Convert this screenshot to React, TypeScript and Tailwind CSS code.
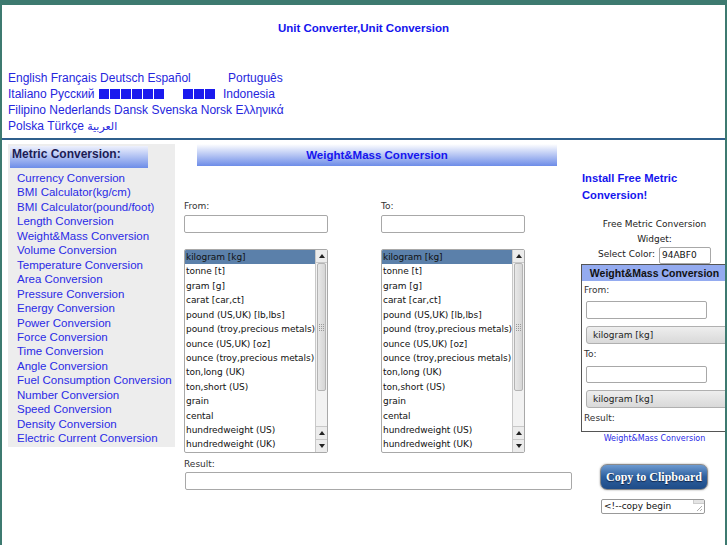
import React from "react";

const UNITS = [
  "kilogram [kg]",
  "tonne [t]",
  "gram [g]",
  "carat [car,ct]",
  "pound (US,UK) [lb,lbs]",
  "pound (troy,precious metals) [lb t]",
  "ounce (US,UK) [oz]",
  "ounce (troy,precious metals) [oz t]",
  "ton,long (UK)",
  "ton,short (US)",
  "grain",
  "cental",
  "hundredweight (US)",
  "hundredweight (UK)",
];

const LINKS = [
  "Currency Conversion",
  "BMI Calculator(kg/cm)",
  "BMI Calculator(pound/foot)",
  "Length Conversion",
  "Weight&Mass Conversion",
  "Volume Conversion",
  "Temperature Conversion",
  "Area Conversion",
  "Pressure Conversion",
  "Energy Conversion",
  "Power Conversion",
  "Force Conversion",
  "Time Conversion",
  "Angle Conversion",
  "Fuel Consumption Conversion",
  "Number Conversion",
  "Speed Conversion",
  "Density Conversion",
  "Electric Current Conversion",
];

function Tri({ down }: { down?: boolean }) {
  return (
    <svg width="6" height="4" viewBox="0 0 6 4" className="block">
      {down ? <polygon points="0,0 6,0 3,4" fill="#222" /> : <polygon points="0,4 6,4 3,0" fill="#222" />}
    </svg>
  );
}

function Scrollbar() {
  return (
    <div className="w-[12px] shrink-0 h-full flex flex-col border-l border-[#c8c8c8] bg-[#f2f2f2]">
      <div className="h-[13px] flex items-center justify-center border-b border-[#c8c8c8] bg-[#ececec]">
        <Tri />
      </div>
      <div className="h-[128px] mx-px rounded-[2px] border border-[#b4b4b4] bg-[linear-gradient(to_right,#e8e8e8,#d6d6d6)] flex items-center justify-center">
        <div className="grid grid-cols-3 gap-px">
          {Array.from({ length: 12 }).map((_, i) => (
            <div key={i} className="w-px h-px bg-[#9a9a9a]" />
          ))}
        </div>
      </div>
      <div className="flex-1" />
      <div className="h-[13px] flex items-center justify-center border-t border-[#c8c8c8] bg-[#ececec]">
        <Tri />
      </div>
      <div className="h-[13px] flex items-center justify-center border-t border-[#c8c8c8] bg-[#ececec]">
        <Tri down />
      </div>
    </div>
  );
}

function ListBox() {
  return (
    <div className="w-[144px] h-[204px] border border-[#a8a8a8] rounded-[2px] bg-white flex overflow-hidden">
      <div className="flex-1 overflow-hidden">
        {UNITS.map((u, i) => (
          <div
            key={u}
            className={
              i === 0
                ? "h-[14.43px] leading-[14.43px] pl-px whitespace-nowrap text-[9px] tracking-[-0.05px] text-[#111] bg-[#5b80aa]"
                : "h-[14.43px] leading-[14.43px] pl-px whitespace-nowrap text-[9px] tracking-[-0.05px] text-[#111]"
            }
          >
            {u}
          </div>
        ))}
      </div>
      <Scrollbar />
    </div>
  );
}

function Box() {
  return <span className="inline-block w-[10px] h-[10px] mr-px bg-[#1a1aee] align-[-1px]" />;
}

function WidgetSelect() {
  return (
    <div className="ml-[4px] w-[150px] h-[18px] rounded-[3px] border border-[#b0b0b0] bg-[linear-gradient(#eeeeee,#d9d9d9)] pl-[6px] text-[9px] leading-[16px] text-[#222]">
      kilogram [kg]
    </div>
  );
}

export default function App() {
  return (
    <div className="w-[727px] h-[545px] overflow-hidden bg-white border-t-[5px] border-x-2 border-[#3d7a70] font-['Liberation_Sans',Arial,sans-serif]">
      {/* Title */}
      <div className="pt-[15px] text-center text-[11.5px] leading-[16px] font-bold text-[#1515ee]">
        Unit Converter,Unit Conversion
      </div>

      {/* Languages */}
      <div className="mt-[34px] pl-[6px] text-[12px] leading-[16px] text-[#2626dd]">
        <div>
          English Français Deutsch Español <span className="ml-[34px]">Português</span>
        </div>
        <div>
          Italiano Русский{" "}
          <span className="inline-block ml-px">
            <Box />
            <Box />
            <Box />
            <Box />
            <Box />
            <Box />
          </span>
          <span className="inline-block ml-[18px]">
            <Box />
            <Box />
            <Box />
          </span>
          <span className="ml-[7px]">Indonesia</span>
        </div>
        <div>Filipino Nederlands Dansk Svenska Norsk Ελληνικά</div>
        <div>
          Polska Türkçe <span className="font-['DejaVu_Sans',sans-serif] text-[11px]">العربية</span>
        </div>
      </div>

      <div className="mt-[3px] h-[2px] bg-[#2f5f8c]" />

      {/* Columns */}
      <div className="flex items-start">
        {/* Sidebar */}
        <div className="ml-[6px] mt-[4px] w-[167px] shrink-0 bg-[#ededed] pt-[2px] pb-px">
          <div className="ml-[2px] w-[138px] h-[22px] bg-[linear-gradient(#eef1fd,#6d8de8)] pl-[2px] text-[12px] leading-[16px] font-bold text-[#1c1c55]">
            Metric Conversion:
          </div>
          <div className="mt-[3px] pl-[9px] text-[11.5px] leading-[14.45px] text-[#2a2ae6]">
            {LINKS.map((l) => (
              <div key={l} className="whitespace-nowrap">
                {l}
              </div>
            ))}
          </div>
        </div>

        {/* Middle */}
        <div className="ml-[9px] mt-[4px] w-[389px] shrink-0 font-['DejaVu_Sans',sans-serif]">
          <div className="ml-[13px] w-[360px] h-[22px] bg-[linear-gradient(#ffffff,#6d8ce8)] text-center font-['Liberation_Sans',Arial,sans-serif] text-[11.5px] font-bold leading-[22px] text-[#1515ee]">
            Weight&amp;Mass Conversion
          </div>
          <div className="mt-[34px] flex gap-[53px]">
            <div className="flex flex-col">
              <div className="text-[9px] leading-[12px] text-[#333]">From:</div>
              <div className="mt-[3px] w-[144px] h-[18px] rounded-[2px] border border-[#a8a8a8] bg-white" />
              <div className="mt-[16px]">
                <ListBox />
              </div>
            </div>
            <div className="flex flex-col">
              <div className="text-[9px] leading-[12px] text-[#333]">To:</div>
              <div className="mt-[3px] w-[144px] h-[18px] rounded-[2px] border border-[#a8a8a8] bg-white" />
              <div className="mt-[16px]">
                <ListBox />
              </div>
            </div>
          </div>
          <div className="mt-[5px] text-[9px] leading-[12px] text-[#333]">Result:</div>
          <div className="mt-[2px] ml-px w-[387px] h-[18px] rounded-[2px] border border-[#a8a8a8] bg-white" />
        </div>

        {/* Right */}
        <div className="ml-[8px] w-[147px] shrink-0 font-['DejaVu_Sans',sans-serif]">
          <div className="mt-[29.5px] pl-px font-['Liberation_Sans',Arial,sans-serif] text-[11.2px] font-bold leading-[17px] text-[#1515ee]">
            Install Free Metric
            <br />
            Conversion!
          </div>
          <div className="mt-[13px] text-center text-[9px] leading-[15px] text-[#222]">
            Free Metric Conversion
            <br />
            Widget:
          </div>
          <div className="flex items-center justify-center gap-[4px] text-[9px] text-[#222]">
            <span>Select Color:</span>
            <div className="w-[52px] h-[17px] border border-[#a8a8a8] rounded-[2px] pl-[2px] leading-[15px] text-[#111]">
              94ABF0
            </div>
          </div>
          <div className="w-[147px] h-[168px] border border-[#555] bg-white">
            <div className="h-[16px] bg-[#94abf0] text-center font-['Liberation_Sans',Arial,sans-serif] text-[10.5px] font-bold leading-[16px] text-[#111]">
              Weight&amp;Mass Conversion
            </div>
            <div className="mt-[3px] pl-[2px] text-[9px] leading-[12px] text-[#333]">From:</div>
            <div className="mt-[5px] ml-[4px] w-[121px] h-[18px] rounded-[2px] border border-[#a8a8a8]" />
            <div className="mt-[7px]">
              <WidgetSelect />
            </div>
            <div className="mt-[4px] pl-[2px] text-[9px] leading-[12px] text-[#333]">To:</div>
            <div className="mt-[6px] ml-[4px] w-[121px] h-[17px] rounded-[2px] border border-[#a8a8a8]" />
            <div className="mt-[7px]">
              <WidgetSelect />
            </div>
            <div className="mt-[4px] pl-[2px] text-[9px] leading-[12px] text-[#333]">Result:</div>
          </div>
          <div className="mt-px text-center text-[8px] leading-[11px] text-[#2a2ae6]">Weight&amp;Mass Conversion</div>
          <div className="mt-[20px] ml-[19px] w-[108px] h-[26px] rounded-[7px] border border-[#8a8a8a] shadow-[0_0_2px_#999] bg-[linear-gradient(#6d9ad0,#2d5f9e_50%,#1e4c88)] text-center font-['Liberation_Serif',serif] text-[12px] font-bold leading-[24px] text-white [text-shadow:0_1px_1px_#102040]">
            Copy to Clipboard
          </div>
          <div className="relative mt-[9px] ml-[20px] w-[104px] h-[15px] rounded-[2px] border border-[#999] pl-[2px] text-[9px] leading-[13px] text-[#111]">
            &lt;!--copy begin
            <div className="absolute right-0 top-0 w-[11px] h-[4px] border-l border-b border-[#ccc] bg-[#e4e4e4]" />
            <svg width="7" height="7" viewBox="0 0 7 7" className="absolute right-px bottom-px">
              <line x1="6" y1="1" x2="1" y2="6" stroke="#999" strokeWidth="0.8" />
              <line x1="6" y1="4" x2="4" y2="6" stroke="#999" strokeWidth="0.8" />
            </svg>
          </div>
        </div>
      </div>
    </div>
  );
}
